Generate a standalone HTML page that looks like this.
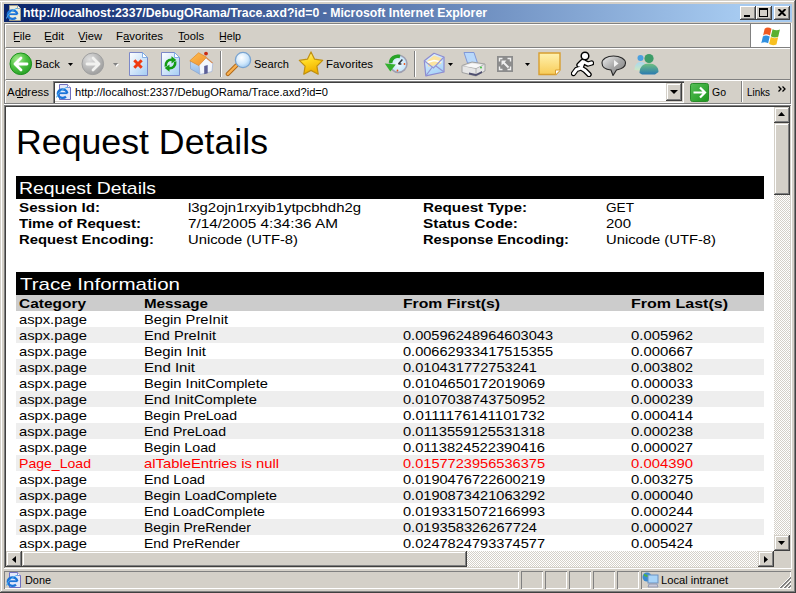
<!DOCTYPE html>
<html><head><meta charset="utf-8">
<style>
html,body{margin:0;padding:0}
body{width:796px;height:593px;overflow:hidden;position:relative;background:#d4d0c8;font-family:"Liberation Sans",sans-serif}
.a{position:absolute}
.t{position:absolute;white-space:pre;transform-origin:0 0;font-family:"Liberation Sans",sans-serif}
.r{position:absolute;left:16px;width:748px;height:16px}
.hl{position:absolute;height:1px}
.vl{position:absolute;width:1px}
.btn{position:absolute;background:#d4d0c8;box-shadow:inset -1px -1px #404040,inset 1px 1px #d4d0c8,inset -2px -2px #808080,inset 2px 2px #fff}
.sunk{position:absolute;box-shadow:inset 1px 1px #808080,inset -1px -1px #fff}
.track{background-color:#fff;background-image:linear-gradient(45deg,#d4d0c8 25%,transparent 25%,transparent 75%,#d4d0c8 75%),linear-gradient(45deg,#d4d0c8 25%,transparent 25%,transparent 75%,#d4d0c8 75%);background-size:2px 2px;background-position:0 0,1px 1px}
</style></head><body>
<!-- window frame -->
<div class="hl" style="left:0;top:1px;width:795px;background:#fff"></div>
<div class="vl" style="left:1px;top:1px;height:591px;background:#fff"></div>
<div class="vl" style="left:794px;top:1px;height:591px;background:#808080"></div>
<div class="vl" style="left:795px;top:0;height:593px;background:#404040"></div>
<div class="hl" style="left:1px;top:591px;width:794px;background:#808080"></div>
<div class="hl" style="left:0;top:592px;width:796px;background:#404040"></div>
<!-- title bar -->
<div class="a" style="left:4px;top:4px;width:788px;height:18px;background:linear-gradient(to right,#0a246a 0px,#a6caf0 734px)"></div>
<div class="btn" style="left:740px;top:6px;width:16px;height:14px;box-shadow:inset -1px -1px #404040,inset 1px 1px #fff,inset -2px -2px #808080,inset 2px 2px #d4d0c8"></div>
<div class="btn" style="left:756px;top:6px;width:16px;height:14px;box-shadow:inset -1px -1px #404040,inset 1px 1px #fff,inset -2px -2px #808080,inset 2px 2px #d4d0c8"></div>
<div class="btn" style="left:774px;top:6px;width:16px;height:14px;box-shadow:inset -1px -1px #404040,inset 1px 1px #fff,inset -2px -2px #808080,inset 2px 2px #d4d0c8"></div>
<!-- rebar bands -->
<div class="hl" style="left:4px;top:23px;width:746px;background:#808080"></div>
<div class="hl" style="left:5px;top:24px;width:745px;background:#fff"></div>
<div class="vl" style="left:4px;top:23px;height:81px;background:#808080"></div>
<div class="vl" style="left:5px;top:24px;height:23px;background:#fff"></div>
<div class="vl" style="left:5px;top:49px;height:30px;background:#fff"></div>
<div class="vl" style="left:5px;top:81px;height:22px;background:#fff"></div>
<div class="hl" style="left:6px;top:47px;width:786px;background:#808080"></div>
<div class="hl" style="left:6px;top:48px;width:786px;background:#fff"></div>
<div class="hl" style="left:6px;top:79px;width:786px;background:#808080"></div>
<div class="hl" style="left:6px;top:80px;width:786px;background:#fff"></div>
<div class="hl" style="left:4px;top:103px;width:787px;background:#808080"></div>
<div class="hl" style="left:4px;top:104px;width:787px;background:#fff"></div>
<!-- windows logo box -->
<div class="a" style="left:750px;top:23px;width:40px;height:24px;background:#fff;box-shadow:inset 1px 1px #808080"></div>
<div class="vl" style="left:790px;top:23px;height:81px;background:#808080"></div>
<div class="vl" style="left:791px;top:23px;height:82px;background:#fff"></div>
<!-- address box -->
<div class="sunk" style="left:53px;top:81px;width:631px;height:22px;background:#fff;box-shadow:inset 1px 1px #808080,inset 2px 2px #404040,inset -1px -1px #fff,inset -2px -2px #d4d0c8"></div>
<div class="btn" style="left:666px;top:83px;width:16px;height:18px"></div>
<div class="vl" style="left:741px;top:81px;height:21px;background:#808080"></div>
<div class="vl" style="left:742px;top:81px;height:21px;background:#fff"></div>
<!-- content border -->
<div class="hl" style="left:4px;top:105px;width:787px;background:#808080"></div>
<div class="hl" style="left:5px;top:106px;width:785px;background:#404040"></div>
<div class="vl" style="left:4px;top:105px;height:463px;background:#808080"></div>
<div class="vl" style="left:5px;top:106px;height:461px;background:#404040"></div>
<div class="vl" style="left:791px;top:105px;height:464px;background:#fff"></div>
<div class="hl" style="left:4px;top:568px;width:788px;background:#fff"></div>
<!-- scrollbars -->
<div class="a track" style="left:774px;top:107px;width:16px;height:444px"></div>
<div class="btn" style="left:774px;top:107px;width:16px;height:16px"></div>
<div class="btn" style="left:774px;top:123px;width:16px;height:72px"></div>
<div class="btn" style="left:774px;top:535px;width:16px;height:16px"></div>
<div class="a track" style="left:6px;top:551px;width:768px;height:16px"></div>
<div class="btn" style="left:6px;top:551px;width:16px;height:16px"></div>
<div class="btn" style="left:22px;top:551px;width:445px;height:16px"></div>
<div class="btn" style="left:758px;top:551px;width:16px;height:16px"></div>
<div class="a" style="left:774px;top:551px;width:16px;height:16px;background:#d4d0c8"></div>
<!-- status bar -->
<div class="sunk" style="left:4px;top:571px;width:515px;height:18px"></div>
<div class="sunk" style="left:521px;top:571px;width:22px;height:18px"></div>
<div class="sunk" style="left:545px;top:571px;width:22px;height:18px"></div>
<div class="sunk" style="left:569px;top:571px;width:22px;height:18px"></div>
<div class="sunk" style="left:593px;top:571px;width:22px;height:18px"></div>
<div class="sunk" style="left:617px;top:571px;width:22px;height:18px"></div>
<div class="sunk" style="left:641px;top:571px;width:150px;height:18px"></div>
<!-- title icon -->
<svg class="a" style="left:5px;top:5px" width="17" height="16" viewBox="0 0 17 16">
<path d="M4.5 0.5h8l3 3v12h-11z" fill="#ecebdc" stroke="#a09c88"/>
<path d="M12.5 0.5v3h3" fill="#fff" stroke="#a09c88" stroke-width="0.8"/>
<path d="M12.3 9.2A4.8 4.3 0 1 0 11 12.6" fill="none" stroke="#1c74d8" stroke-width="2.3"/>
<path d="M3 9.2h9.5" stroke="#1c74d8" stroke-width="1.8"/>
<path d="M1.5 13.5c1-4 6-9 11.5-10.5" fill="none" stroke="#50b0f0" stroke-width="1"/>
</svg>
<!-- caption buttons glyphs -->
<div class="a" style="left:744px;top:15px;width:6px;height:2px;background:#000"></div>
<div class="a" style="left:759px;top:8px;width:9px;height:9px;box-shadow:inset 0 2px #000,inset 1px 0 #000,inset -1px 0 #000,inset 0 -1px #000"></div>
<svg class="a" style="left:777px;top:9px" width="10" height="7" viewBox="0 0 10 7"><path d="M1.5 0l7 7M8.5 0l-7 7" stroke="#000" stroke-width="2"/></svg>
<!-- windows logo -->
<svg class="a" style="left:760px;top:26px" width="23" height="20" viewBox="0 0 21 19">
<path d="M4 2.5c2-1.5 4-1.3 6.5 0l-1.5 6.5c-2.5-1.3-4.5-1.5-6.5 0z" fill="#f05a22"/>
<path d="M11.5 3c2.2 1.2 4.5 1.6 7 0.4l-1.6 6.7c-2.5 1.1-4.8 0.9-7-0.4z" fill="#58b030"/>
<path d="M2.3 10c2-1.5 4-1.3 6.5 0l-1.5 6.5c-2.5-1.3-4.5-1.5-6.5 0z" fill="#3090e0"/>
<path d="M9.8 10.4c2.2 1.2 4.5 1.6 7 0.4l-1.6 6.7c-2.5 1.1-4.8 0.9-7-0.4z" fill="#f8c020"/>
</svg>
<!-- back -->
<svg class="a" style="left:9px;top:52px" width="24" height="24" viewBox="0 0 24 24">
<defs><radialGradient id="gb" cx="0.35" cy="0.3" r="0.8"><stop offset="0" stop-color="#a8ec90"/><stop offset="0.5" stop-color="#4cc040"/><stop offset="1" stop-color="#229a22"/></radialGradient>
<radialGradient id="gf" cx="0.35" cy="0.3" r="0.8"><stop offset="0" stop-color="#e0e0e0"/><stop offset="0.6" stop-color="#b4b4b4"/><stop offset="1" stop-color="#989898"/></radialGradient>
<linearGradient id="pg" x1="0" y1="0" x2="1" y2="1"><stop offset="0" stop-color="#ffffff"/><stop offset="1" stop-color="#a4cdf4"/></linearGradient>
<linearGradient id="ng" x1="0" y1="0" x2="0" y2="1"><stop offset="0" stop-color="#fff2b0"/><stop offset="1" stop-color="#f8cc58"/></linearGradient>
</defs>
<circle cx="11.8" cy="11.8" r="10.8" fill="url(#gb)" stroke="#1c921c" stroke-width="1"/>
<path d="M18 12H6M12 6l-6 6 6 6" fill="none" stroke="#fff" stroke-width="2.8" stroke-linecap="round" stroke-linejoin="round"/>
</svg>
<svg class="a" style="left:68px;top:63px" width="6" height="3"><path d="M0 0h5l-2.5 3z" fill="#000"/></svg>
<!-- forward -->
<svg class="a" style="left:81px;top:52px" width="24" height="24" viewBox="0 0 24 24">
<circle cx="11.8" cy="11.8" r="10.8" fill="url(#gf)" stroke="#a0a0a0" stroke-width="1"/>
<path d="M6 12h12M12 6l6 6-6 6" fill="none" stroke="#f2f2f0" stroke-width="2.8" stroke-linecap="round" stroke-linejoin="round"/>
</svg>
<svg class="a" style="left:113px;top:63px" width="7" height="5"><path d="M1 1h5l-2.5 3z" fill="#fff"/><path d="M0 0h5l-2.5 3z" fill="#808080"/></svg>
<!-- stop -->
<svg class="a" style="left:128px;top:52px" width="21" height="24" viewBox="0 0 21 24">
<path d="M1.5 0.5h13l5 5v18h-18z" fill="url(#pg)" stroke="#7c88c8"/>
<path d="M14.5 0.5v5h5z" fill="#fff" stroke="#6ca0e0" stroke-width="0.8"/>
<path d="M6.3 8.3l7.4 7.4M13.7 8.3l-7.4 7.4" stroke="#f03a10" stroke-width="3"/>
</svg>
<!-- refresh -->
<svg class="a" style="left:160px;top:52px" width="21" height="24" viewBox="0 0 21 24">
<path d="M1.5 0.5h13l5 5v18h-18z" fill="url(#pg)" stroke="#7c88c8"/>
<path d="M14.5 0.5v5h5z" fill="#fff" stroke="#6ca0e0" stroke-width="0.8"/>
<path d="M5.8 14.5C5.3 10 8 7.5 12 7.8" fill="none" stroke="#149c14" stroke-width="2.6"/>
<path d="M11.5 4.3L16.3 8 11.5 11.5z" fill="#149c14"/>
<path d="M15.2 9.5C15.7 14 13 16.5 9 16.2" fill="none" stroke="#149c14" stroke-width="2.6"/>
<path d="M9.5 12.5L4.7 16 9.5 19.7z" fill="#149c14"/>
</svg>
<!-- home -->
<svg class="a" style="left:189px;top:51px" width="25" height="26" viewBox="0 0 25 26">
<defs><linearGradient id="hw" x1="0" y1="0" x2="0" y2="1"><stop offset="0" stop-color="#c4dcf4"/><stop offset="1" stop-color="#90b8e8"/></linearGradient>
<linearGradient id="hr" x1="0" y1="0" x2="1" y2="1"><stop offset="0" stop-color="#ffc050"/><stop offset="1" stop-color="#f09030"/></linearGradient></defs>
<path d="M1.5 10L10 14l1 9.3-9.5-5.5z" fill="url(#hw)" stroke="#8aa6d0" stroke-width="0.8"/>
<path d="M17 6.5l6.8 5.7-0.8 8.3-12 3-1-10z" fill="#f2f6fc" stroke="#a8b8d8" stroke-width="0.8"/>
<path d="M15.2 15l3.5-1v8.2l-3.5 1z" fill="#5c6098"/>
<path d="M0.8 9.8L9.6 1.8 17.6 6.2 9.8 14.6z" fill="url(#hr)" stroke="#e08828" stroke-width="0.7"/>
<path d="M17.6 6.2l6.4 5.6-0.8 0.6-6-5z" fill="#d88a50"/>
<circle cx="17" cy="2.6" r="1.9" fill="#c82a10"/>
</svg>
<!-- separator -->
<div class="vl" style="left:220px;top:51px;height:26px;background:#808080"></div>
<div class="vl" style="left:221px;top:51px;height:26px;background:#fff"></div>
<!-- search -->
<svg class="a" style="left:225px;top:51px" width="27" height="26" viewBox="0 0 27 26">
<defs><radialGradient id="lg" cx="0.4" cy="0.35" r="0.7"><stop offset="0" stop-color="#ffffff"/><stop offset="0.6" stop-color="#d0e8fc"/><stop offset="1" stop-color="#98c4ee"/></radialGradient></defs>
<path d="M2.8 23l8.5-8.5" stroke="#b06818" stroke-width="4.2" stroke-linecap="round"/>
<path d="M2.8 23l8.5-8.5" stroke="#f8b050" stroke-width="2.4" stroke-linecap="round"/>
<circle cx="18" cy="9" r="7.6" fill="url(#lg)" stroke="#7aa4d0" stroke-width="1.3"/>
</svg>
<!-- favorites star -->
<svg class="a" style="left:297px;top:51px" width="28" height="26" viewBox="0 0 28 26">
<defs><linearGradient id="sg" x1="0" y1="0" x2="0.3" y2="1"><stop offset="0" stop-color="#fff8a0"/><stop offset="0.5" stop-color="#ffd820"/><stop offset="1" stop-color="#f0b000"/></linearGradient></defs>
<path d="M14.0 0.9L17.6 8.2L25.7 9.4L19.9 15.1L21.2 23.2L14.0 19.4L6.8 23.2L8.1 15.1L2.3 9.4L10.4 8.2z" fill="url(#sg)" stroke="#c09010" stroke-width="1.2" stroke-linejoin="round"/>
</svg>
<!-- history -->
<svg class="a" style="left:383px;top:53px" width="26" height="23" viewBox="0 0 26 23">
<defs><radialGradient id="cg" cx="0.5" cy="0.5" r="0.5"><stop offset="0" stop-color="#f4fbff"/><stop offset="0.8" stop-color="#cce8fa"/><stop offset="1" stop-color="#a8d0f0"/></radialGradient></defs>
<circle cx="15.4" cy="10.8" r="8.6" fill="url(#cg)" stroke="#a0a0b0" stroke-width="1.5"/>
<path d="M15.4 11l4-4.5M15.4 11h3" stroke="#303840" stroke-width="1.5"/>
<circle cx="21.5" cy="11" r="0.9" fill="#f05010"/><circle cx="14.5" cy="17.5" r="0.9" fill="#f05010"/>
<path d="M17 3.5C12 2.5 8 5 7.5 10" fill="none" stroke="#28a428" stroke-width="3.6"/>
<path d="M1.8 10.5l11 1-5.5 7z" fill="#34b030"/>
</svg>
<div class="vl" style="left:414px;top:51px;height:26px;background:#808080"></div>
<div class="vl" style="left:415px;top:51px;height:26px;background:#fff"></div>
<!-- mail -->
<svg class="a" style="left:423px;top:52px" width="22" height="25" viewBox="0 0 22 25">
<defs><linearGradient id="eg" x1="0" y1="0" x2="0.4" y2="1"><stop offset="0" stop-color="#e8f4ff"/><stop offset="1" stop-color="#a8d4f8"/></linearGradient></defs>
<path d="M1.3 8.8L11 1.3 21 5V20L2.8 23.9z" fill="url(#eg)" stroke="#8c8cd0" stroke-width="1.2" stroke-linejoin="round"/>
<path d="M3.5 9.5L11 3.5l7.5 2.8-0.5 5.5-12.5 3z" fill="#fce4a0"/>
<path d="M4 10.5l7-2 7.5 1.5" fill="none" stroke="#fff" stroke-width="1.4"/>
<path d="M1.3 8.8L10.5 16 21 5M2.8 23.9L9 15.5M21 20l-8-6" fill="none" stroke="#9494d4" stroke-width="1.1"/>
</svg>
<svg class="a" style="left:448px;top:63px" width="6" height="3"><path d="M0 0h5l-2.5 3z" fill="#000"/></svg>
<!-- print -->
<svg class="a" style="left:461px;top:51px" width="25" height="26" viewBox="0 0 25 26">
<path d="M3 1.5h10l3.5 10.5h-10z" fill="#b8d8fa" stroke="#8098d8" stroke-width="1"/>
<path d="M1 14.5l10-3.5 13 2v7l-9 5-14-3.5z" fill="#e6e6e6" stroke="#a0a0a0" stroke-width="1"/>
<path d="M1 14.5l14 3 9-4.5M15 17.5v7.5" fill="none" stroke="#b0b0b0" stroke-width="1"/>
<path d="M3 15l8-2.5 10 1.5-6 3z" fill="#f8f8f8"/>
<path d="M8 21.5l7 1.5 6-3v2l-6 3-7-1.5z" fill="#505070"/>
<circle cx="20" cy="16.5" r="0.9" fill="#30c030"/>
</svg>
<!-- edit -->
<svg class="a" style="left:497px;top:56px" width="16" height="16" viewBox="0 0 16 16">
<rect x="0" y="0" width="16" height="16" fill="#8c8c8c"/>
<path d="M2.5 5.5v-3h3M13.5 5.5v-3h-3M2.5 10.5v3h3M13.5 10.5v3h-3" fill="none" stroke="#f0f0f0" stroke-width="1.4"/>
<path d="M6 6l5.5 5.5" stroke="#f0f0f0" stroke-width="2"/>
<path d="M4.5 4.5h5l-5 5z" fill="#f0f0f0"/>
</svg>
<svg class="a" style="left:525px;top:63px" width="6" height="3"><path d="M0 0h5l-2.5 3z" fill="#000"/></svg>
<!-- note -->
<svg class="a" style="left:538px;top:52px" width="24" height="24" viewBox="0 0 24 24">
<path d="M1 1h21v17l-4 4.5H1z" fill="url(#ng)" stroke="#d89e30" stroke-width="1.4"/>
<path d="M17.5 22.5v-4.5h4.5" fill="#fff" stroke="#d89e30" stroke-width="1"/>
</svg>
<!-- AIM -->
<svg class="a" style="left:571px;top:51px" width="23" height="26" viewBox="0 0 23 26">
<g fill="none" stroke-linecap="round" stroke-linejoin="round">
<path d="M12.5 10l-2.5 7M12 10.5l5 2.5 3.5-1M11.5 10.5l-3.5 3.5M10 17l-4.5 1.5-3 4M10 17l4 2.5 4 4" stroke="#000" stroke-width="5.4"/>
<path d="M12.5 10l-2.5 7M12 10.5l5 2.5 3.5-1M11.5 10.5l-3.5 3.5M10 17l-4.5 1.5-3 4M10 17l4 2.5 4 4" stroke="#fff" stroke-width="3"/>
</g>
<circle cx="14" cy="5" r="3.8" fill="#fff" stroke="#000" stroke-width="1.5"/>
</svg>
<!-- messenger -->
<svg class="a" style="left:601px;top:55px" width="26" height="21" viewBox="0 0 26 21">
<defs><linearGradient id="mg" x1="0" y1="0" x2="1" y2="1"><stop offset="0" stop-color="#f0f0f0"/><stop offset="0.5" stop-color="#a8a8a8"/><stop offset="1" stop-color="#808080"/></linearGradient></defs>
<path d="M12.5 1C6 1 1 3.8 1 8S5 14.5 10 15l2 5.5 3.5-5.5C20.5 14 24.5 11.5 24.5 8 24.5 3.8 19 1 12.5 1z" fill="url(#mg)" stroke="#282828" stroke-width="1.1"/>
<path d="M13 5v7l4.5-3.5z" fill="#f4f4f4"/>
</svg>
<!-- msn -->
<svg class="a" style="left:633px;top:53px" width="26" height="22" viewBox="0 0 26 22">
<defs><linearGradient id="msg" x1="0" y1="0" x2="0" y2="1"><stop offset="0" stop-color="#70c080"/><stop offset="1" stop-color="#2a7ab0"/></linearGradient>
<linearGradient id="msb" x1="0" y1="0" x2="0" y2="1"><stop offset="0" stop-color="#a8d8f0"/><stop offset="1" stop-color="#d0e8c0"/></linearGradient></defs>
<circle cx="7.5" cy="5" r="3" fill="#4aa0e0"/>
<path d="M1.5 17c0-5 2.5-8 6-8s5 2 5.5 4l-2 5z" fill="url(#msb)"/>
<circle cx="16" cy="5.5" r="4.6" fill="#3c9c68"/>
<path d="M6.5 20c0-6.5 4-9.5 9.5-9.5s9.5 3 9.5 8.5l-3.5 2.5H9z" fill="url(#msg)"/>
</svg>
<!-- address icon -->
<svg class="a" style="left:55px;top:84px" width="17" height="16" viewBox="0 0 17 16">
<path d="M4.5 0.5h8l3 3v12h-11z" fill="#e4e8fa" stroke="#7070c0"/>
<path d="M12.5 0.5v3h3" fill="#fff" stroke="#7070c0" stroke-width="0.8"/>
<path d="M12.3 9.2A4.8 4.3 0 1 0 11 12.6" fill="none" stroke="#1c74d8" stroke-width="2.3"/>
<path d="M3 9.2h9.5" stroke="#1c74d8" stroke-width="1.8"/>
<path d="M1.5 13.5c1-4 6-9 11.5-10.5" fill="none" stroke="#50b0f0" stroke-width="1"/>
</svg>
<!-- address dropdown arrow -->
<svg class="a" style="left:670px;top:90px" width="8" height="4"><path d="M0 0h8l-4 4z" fill="#000"/></svg>
<!-- go -->
<svg class="a" style="left:690px;top:83px" width="19" height="19" viewBox="0 0 19 19">
<defs><linearGradient id="gog" x1="0" y1="0" x2="1" y2="1"><stop offset="0" stop-color="#58c058"/><stop offset="1" stop-color="#1c961c"/></linearGradient></defs>
<rect x="0.5" y="0.5" width="18" height="18" rx="2" fill="url(#gog)" stroke="#2a8a2a"/>
<path d="M3.5 9.5h11M10 4.5l5 5-5 5" fill="none" stroke="#fff" stroke-width="2.2" stroke-linejoin="miter"/>
</svg>
<!-- chevron -->
<svg class="a" style="left:778px;top:86px" width="9" height="6" viewBox="0 0 9 6"><path d="M0.5 0.5l2.5 2.5-2.5 2.5M4.5 0.5l2.5 2.5-2.5 2.5" fill="none" stroke="#000" stroke-width="1.3"/></svg>
<!-- scroll arrows -->
<svg class="a" style="left:778px;top:112px" width="7" height="4"><path d="M3.5 0L7 4H0z" fill="#000"/></svg>
<svg class="a" style="left:778px;top:541px" width="7" height="4"><path d="M0 0h7L3.5 4z" fill="#000"/></svg>
<svg class="a" style="left:12px;top:556px" width="4" height="7"><path d="M4 0v7L0 3.5z" fill="#000"/></svg>
<svg class="a" style="left:764px;top:556px" width="4" height="7"><path d="M0 0v7l4-3.5z" fill="#000"/></svg>
<!-- status icons -->
<svg class="a" style="left:5px;top:572px" width="17" height="16" viewBox="0 0 17 16">
<path d="M4.5 0.5h8l3 3v12h-11z" fill="#e4e8fa" stroke="#7070c0"/>
<path d="M12.5 0.5v3h3" fill="#fff" stroke="#7070c0" stroke-width="0.8"/>
<path d="M12.3 9.2A4.8 4.3 0 1 0 11 12.6" fill="none" stroke="#1c74d8" stroke-width="2.3"/>
<path d="M3 9.2h9.5" stroke="#1c74d8" stroke-width="1.8"/>
<path d="M1.5 13.5c1-4 6-9 11.5-10.5" fill="none" stroke="#50b0f0" stroke-width="1"/>
</svg>
<svg class="a" style="left:642px;top:572px" width="17" height="16" viewBox="0 0 17 16">
<circle cx="5" cy="5" r="4.5" fill="#3a8ad0"/><path d="M2 3c2 0 3 2 5 1" stroke="#50b040" stroke-width="2" fill="none"/>
<rect x="6" y="3" width="10" height="8" fill="#a8d4f8" stroke="#6a90c0"/>
<path d="M7 12h8l1 3H6z" fill="#c8c8d8" stroke="#8890a8" stroke-width="0.8"/>
</svg>
<!-- grip -->
<svg class="a" style="left:778px;top:575px" width="14" height="14" viewBox="0 0 14 14">
<path d="M13 1L1 13M13 5L5 13M13 9L9 13" stroke="#fff" stroke-width="1"/>
<path d="M13 2L2 13M13 3L3 13M13 6L6 13M13 7L7 13M13 10L10 13M13 11L11 13" stroke="#808080" stroke-width="1"/>
</svg>
<!-- mnemonic underlines -->
<div class="hl" style="left:14px;top:41px;width:6px;background:#000"></div>
<div class="hl" style="left:46px;top:41px;width:6px;background:#000"></div>
<div class="hl" style="left:80px;top:41px;width:6px;background:#000"></div>
<div class="hl" style="left:124px;top:41px;width:6px;background:#000"></div>
<div class="hl" style="left:179px;top:41px;width:6px;background:#000"></div>
<div class="hl" style="left:220px;top:41px;width:6px;background:#000"></div>
<div class="hl" style="left:17px;top:97px;width:6px;background:#000"></div>

<div class="a" style="left:6px;top:107px;width:768px;height:444px;background:#fff;overflow:hidden">
</div>
<div class="a" style="left:16px;top:176px;width:748px;height:23px;background:#000"></div>
<div class="a" style="left:16px;top:272px;width:748px;height:23px;background:#000"></div>
<div class="a" style="left:16px;top:295px;width:748px;height:16px;background:#cccccc"></div>
<div class="r" style="top:327px;background:#eeeeee"></div><div class="r" style="top:359px;background:#eeeeee"></div><div class="r" style="top:391px;background:#eeeeee"></div><div class="r" style="top:423px;background:#eeeeee"></div><div class="r" style="top:455px;background:#eeeeee"></div><div class="r" style="top:487px;background:#eeeeee"></div><div class="r" style="top:519px;background:#eeeeee"></div>
<div class="t" style="left:22.70px;top:5.84px;font-size:12px;line-height:14px;font-weight:bold;color:#fff;transform:scaleX(1.0225)">http://localhost:2337/DebugORama/Trace.axd?id=0 - Microsoft Internet Explorer</div>
<div class="t" style="left:12.70px;top:29.69px;font-size:11px;line-height:13px;color:#000;transform:scaleX(1.0150)">File</div>
<div class="t" style="left:43.70px;top:29.69px;font-size:11px;line-height:13px;color:#000;transform:scaleX(1.0544)">Edit</div>
<div class="t" style="left:77.70px;top:29.69px;font-size:11px;line-height:13px;color:#000;transform:scaleX(1.0145)">View</div>
<div class="t" style="left:115.70px;top:29.69px;font-size:11px;line-height:13px;color:#000;transform:scaleX(1.0387)">Favorites</div>
<div class="t" style="left:177.70px;top:29.69px;font-size:11px;line-height:13px;color:#000;transform:scaleX(1.0122)">Tools</div>
<div class="t" style="left:218.70px;top:29.69px;font-size:11px;line-height:13px;color:#000;transform:scaleX(0.9724)">Help</div>
<div class="t" style="left:34.70px;top:57.69px;font-size:11px;line-height:13px;color:#000;transform:scaleX(1.0217)">Back</div>
<div class="t" style="left:253.70px;top:57.69px;font-size:11px;line-height:13px;color:#000;transform:scaleX(1.0040)">Search</div>
<div class="t" style="left:325.70px;top:57.69px;font-size:11px;line-height:13px;color:#000;transform:scaleX(1.0387)">Favorites</div>
<div class="t" style="left:6.70px;top:85.69px;font-size:11px;line-height:13px;color:#000;transform:scaleX(1.0407)">Address</div>
<div class="t" style="left:74.70px;top:85.69px;font-size:11px;line-height:13px;color:#000;transform:scaleX(1.0095)">http://localhost:2337/DebugORama/Trace.axd?id=0</div>
<div class="t" style="left:711.70px;top:85.69px;font-size:11px;line-height:13px;color:#000;transform:scaleX(0.9532)">Go</div>
<div class="t" style="left:746.70px;top:85.69px;font-size:11px;line-height:13px;color:#000;transform:scaleX(0.8954)">Links</div>
<div class="t" style="left:24.70px;top:573.69px;font-size:11px;line-height:13px;color:#000;transform:scaleX(0.9887)">Done</div>
<div class="t" style="left:660.70px;top:573.69px;font-size:11px;line-height:13px;color:#000;transform:scaleX(1.0144)">Local intranet</div>
<div class="t" style="left:16.20px;top:120.87px;font-size:35px;line-height:42px;color:#000;transform:scaleX(1.0199)">Request Details</div>
<div class="t" style="left:18.70px;top:179.11px;font-size:17px;line-height:20px;color:#fff;transform:scaleX(1.1415)">Request Details</div>
<div class="t" style="left:18.70px;top:199.50px;font-size:13px;line-height:16px;font-weight:bold;color:#000;transform:scaleX(1.1678)">Session Id:</div>
<div class="t" style="left:18.70px;top:215.50px;font-size:13px;line-height:16px;font-weight:bold;color:#000;transform:scaleX(1.1595)">Time of Request:</div>
<div class="t" style="left:18.70px;top:231.50px;font-size:13px;line-height:16px;font-weight:bold;color:#000;transform:scaleX(1.1397)">Request Encoding:</div>
<div class="t" style="left:187.70px;top:199.50px;font-size:13px;line-height:16px;color:#000;transform:scaleX(1.1452)">l3g2ojn1rxyib1ytpcbhdh2g</div>
<div class="t" style="left:187.70px;top:215.50px;font-size:13px;line-height:16px;color:#000;transform:scaleX(1.1791)">7/14/2005 4:34:36 AM</div>
<div class="t" style="left:187.70px;top:231.50px;font-size:13px;line-height:16px;color:#000;transform:scaleX(1.1364)">Unicode (UTF-8)</div>
<div class="t" style="left:422.70px;top:199.50px;font-size:13px;line-height:16px;font-weight:bold;color:#000;transform:scaleX(1.1737)">Request Type:</div>
<div class="t" style="left:422.70px;top:215.50px;font-size:13px;line-height:16px;font-weight:bold;color:#000;transform:scaleX(1.1850)">Status Code:</div>
<div class="t" style="left:422.70px;top:231.50px;font-size:13px;line-height:16px;font-weight:bold;color:#000;transform:scaleX(1.1292)">Response Encoding:</div>
<div class="t" style="left:605.70px;top:199.50px;font-size:13px;line-height:16px;color:#000;transform:scaleX(1.0473)">GET</div>
<div class="t" style="left:605.70px;top:215.50px;font-size:13px;line-height:16px;color:#000;transform:scaleX(1.1519)">200</div>
<div class="t" style="left:605.70px;top:231.50px;font-size:13px;line-height:16px;color:#000;transform:scaleX(1.1364)">Unicode (UTF-8)</div>
<div class="t" style="left:19.70px;top:275.11px;font-size:17px;line-height:20px;color:#fff;transform:scaleX(1.2067)">Trace Information</div>
<div class="t" style="left:18.70px;top:295.50px;font-size:13px;line-height:16px;font-weight:bold;color:#000;transform:scaleX(1.1888)">Category</div>
<div class="t" style="left:143.70px;top:295.50px;font-size:13px;line-height:16px;font-weight:bold;color:#000;transform:scaleX(1.1653)">Message</div>
<div class="t" style="left:402.70px;top:295.50px;font-size:13px;line-height:16px;font-weight:bold;color:#000;transform:scaleX(1.2099)">From First(s)</div>
<div class="t" style="left:630.70px;top:295.50px;font-size:13px;line-height:16px;font-weight:bold;color:#000;transform:scaleX(1.2320)">From Last(s)</div>
<div class="t" style="left:18.70px;top:311.50px;font-size:13px;line-height:16px;color:#000;transform:scaleX(1.1333)">aspx.page</div>
<div class="t" style="left:143.70px;top:311.50px;font-size:13px;line-height:16px;color:#000;transform:scaleX(1.1285)">Begin PreInit</div>
<div class="t" style="left:18.70px;top:327.50px;font-size:13px;line-height:16px;color:#000;transform:scaleX(1.1333)">aspx.page</div>
<div class="t" style="left:143.70px;top:327.50px;font-size:13px;line-height:16px;color:#000;transform:scaleX(1.1193)">End PreInit</div>
<div class="t" style="left:402.70px;top:327.50px;font-size:13px;line-height:16px;color:#000;transform:scaleX(1.1214)">0.00596248964603043</div>
<div class="t" style="left:630.70px;top:327.50px;font-size:13px;line-height:16px;color:#000;transform:scaleX(1.1432)">0.005962</div>
<div class="t" style="left:18.70px;top:343.50px;font-size:13px;line-height:16px;color:#000;transform:scaleX(1.1333)">aspx.page</div>
<div class="t" style="left:143.70px;top:343.50px;font-size:13px;line-height:16px;color:#000;transform:scaleX(1.1438)">Begin Init</div>
<div class="t" style="left:402.70px;top:343.50px;font-size:13px;line-height:16px;color:#000;transform:scaleX(1.1214)">0.00662933417515355</div>
<div class="t" style="left:630.70px;top:343.50px;font-size:13px;line-height:16px;color:#000;transform:scaleX(1.1432)">0.000667</div>
<div class="t" style="left:18.70px;top:359.50px;font-size:13px;line-height:16px;color:#000;transform:scaleX(1.1333)">aspx.page</div>
<div class="t" style="left:143.70px;top:359.50px;font-size:13px;line-height:16px;color:#000;transform:scaleX(1.1566)">End Init</div>
<div class="t" style="left:402.70px;top:359.50px;font-size:13px;line-height:16px;color:#000;transform:scaleX(1.1232)">0.010431772753241</div>
<div class="t" style="left:630.70px;top:359.50px;font-size:13px;line-height:16px;color:#000;transform:scaleX(1.1432)">0.003802</div>
<div class="t" style="left:18.70px;top:375.50px;font-size:13px;line-height:16px;color:#000;transform:scaleX(1.1333)">aspx.page</div>
<div class="t" style="left:143.70px;top:375.50px;font-size:13px;line-height:16px;color:#000;transform:scaleX(1.1289)">Begin InitComplete</div>
<div class="t" style="left:402.70px;top:375.50px;font-size:13px;line-height:16px;color:#000;transform:scaleX(1.1223)">0.0104650172019069</div>
<div class="t" style="left:630.70px;top:375.50px;font-size:13px;line-height:16px;color:#000;transform:scaleX(1.1432)">0.000033</div>
<div class="t" style="left:18.70px;top:391.50px;font-size:13px;line-height:16px;color:#000;transform:scaleX(1.1333)">aspx.page</div>
<div class="t" style="left:143.70px;top:391.50px;font-size:13px;line-height:16px;color:#000;transform:scaleX(1.1330)">End InitComplete</div>
<div class="t" style="left:402.70px;top:391.50px;font-size:13px;line-height:16px;color:#000;transform:scaleX(1.1223)">0.0107038743750952</div>
<div class="t" style="left:630.70px;top:391.50px;font-size:13px;line-height:16px;color:#000;transform:scaleX(1.1432)">0.000239</div>
<div class="t" style="left:18.70px;top:407.50px;font-size:13px;line-height:16px;color:#000;transform:scaleX(1.1333)">aspx.page</div>
<div class="t" style="left:143.70px;top:407.50px;font-size:13px;line-height:16px;color:#000;transform:scaleX(1.0812)">Begin PreLoad</div>
<div class="t" style="left:402.70px;top:407.50px;font-size:13px;line-height:16px;color:#000;transform:scaleX(1.1576)">0.0111176141101732</div>
<div class="t" style="left:630.70px;top:407.50px;font-size:13px;line-height:16px;color:#000;transform:scaleX(1.1432)">0.000414</div>
<div class="t" style="left:18.70px;top:423.50px;font-size:13px;line-height:16px;color:#000;transform:scaleX(1.1333)">aspx.page</div>
<div class="t" style="left:143.70px;top:423.50px;font-size:13px;line-height:16px;color:#000;transform:scaleX(1.0803)">End PreLoad</div>
<div class="t" style="left:402.70px;top:423.50px;font-size:13px;line-height:16px;color:#000;transform:scaleX(1.1309)">0.0113559125531318</div>
<div class="t" style="left:630.70px;top:423.50px;font-size:13px;line-height:16px;color:#000;transform:scaleX(1.1432)">0.000238</div>
<div class="t" style="left:18.70px;top:439.50px;font-size:13px;line-height:16px;color:#000;transform:scaleX(1.1333)">aspx.page</div>
<div class="t" style="left:143.70px;top:439.50px;font-size:13px;line-height:16px;color:#000;transform:scaleX(1.0945)">Begin Load</div>
<div class="t" style="left:402.70px;top:439.50px;font-size:13px;line-height:16px;color:#000;transform:scaleX(1.1309)">0.0113824522390416</div>
<div class="t" style="left:630.70px;top:439.50px;font-size:13px;line-height:16px;color:#000;transform:scaleX(1.1432)">0.000027</div>
<div class="t" style="left:18.70px;top:455.50px;font-size:13px;line-height:16px;color:#f00;transform:scaleX(1.0825)">Page_Load</div>
<div class="t" style="left:143.70px;top:455.50px;font-size:13px;line-height:16px;color:#f00;transform:scaleX(1.1391)">alTableEntries is null</div>
<div class="t" style="left:402.70px;top:455.50px;font-size:13px;line-height:16px;color:#f00;transform:scaleX(1.1223)">0.0157723956536375</div>
<div class="t" style="left:630.70px;top:455.50px;font-size:13px;line-height:16px;color:#f00;transform:scaleX(1.1432)">0.004390</div>
<div class="t" style="left:18.70px;top:471.50px;font-size:13px;line-height:16px;color:#000;transform:scaleX(1.1333)">aspx.page</div>
<div class="t" style="left:143.70px;top:471.50px;font-size:13px;line-height:16px;color:#000;transform:scaleX(1.0957)">End Load</div>
<div class="t" style="left:402.70px;top:471.50px;font-size:13px;line-height:16px;color:#000;transform:scaleX(1.1223)">0.0190476722600219</div>
<div class="t" style="left:630.70px;top:471.50px;font-size:13px;line-height:16px;color:#000;transform:scaleX(1.1432)">0.003275</div>
<div class="t" style="left:18.70px;top:487.50px;font-size:13px;line-height:16px;color:#000;transform:scaleX(1.1333)">aspx.page</div>
<div class="t" style="left:143.70px;top:487.50px;font-size:13px;line-height:16px;color:#000;transform:scaleX(1.0954)">Begin LoadComplete</div>
<div class="t" style="left:402.70px;top:487.50px;font-size:13px;line-height:16px;color:#000;transform:scaleX(1.1223)">0.0190873421063292</div>
<div class="t" style="left:630.70px;top:487.50px;font-size:13px;line-height:16px;color:#000;transform:scaleX(1.1432)">0.000040</div>
<div class="t" style="left:18.70px;top:503.50px;font-size:13px;line-height:16px;color:#000;transform:scaleX(1.1333)">aspx.page</div>
<div class="t" style="left:143.70px;top:503.50px;font-size:13px;line-height:16px;color:#000;transform:scaleX(1.0870)">End LoadComplete</div>
<div class="t" style="left:402.70px;top:503.50px;font-size:13px;line-height:16px;color:#000;transform:scaleX(1.1223)">0.0193315072166993</div>
<div class="t" style="left:630.70px;top:503.50px;font-size:13px;line-height:16px;color:#000;transform:scaleX(1.1432)">0.000244</div>
<div class="t" style="left:18.70px;top:519.50px;font-size:13px;line-height:16px;color:#000;transform:scaleX(1.1333)">aspx.page</div>
<div class="t" style="left:143.70px;top:519.50px;font-size:13px;line-height:16px;color:#000;transform:scaleX(1.0728)">Begin PreRender</div>
<div class="t" style="left:402.70px;top:519.50px;font-size:13px;line-height:16px;color:#000;transform:scaleX(1.1232)">0.019358326267724</div>
<div class="t" style="left:630.70px;top:519.50px;font-size:13px;line-height:16px;color:#000;transform:scaleX(1.1432)">0.000027</div>
<div class="t" style="left:18.70px;top:535.50px;font-size:13px;line-height:16px;color:#000;transform:scaleX(1.1333)">aspx.page</div>
<div class="t" style="left:143.70px;top:535.50px;font-size:13px;line-height:16px;color:#000;transform:scaleX(1.0711)">End PreRender</div>
<div class="t" style="left:402.70px;top:535.50px;font-size:13px;line-height:16px;color:#000;transform:scaleX(1.1223)">0.0247824793374577</div>
<div class="t" style="left:630.70px;top:535.50px;font-size:13px;line-height:16px;color:#000;transform:scaleX(1.1432)">0.005424</div>
</body></html>
